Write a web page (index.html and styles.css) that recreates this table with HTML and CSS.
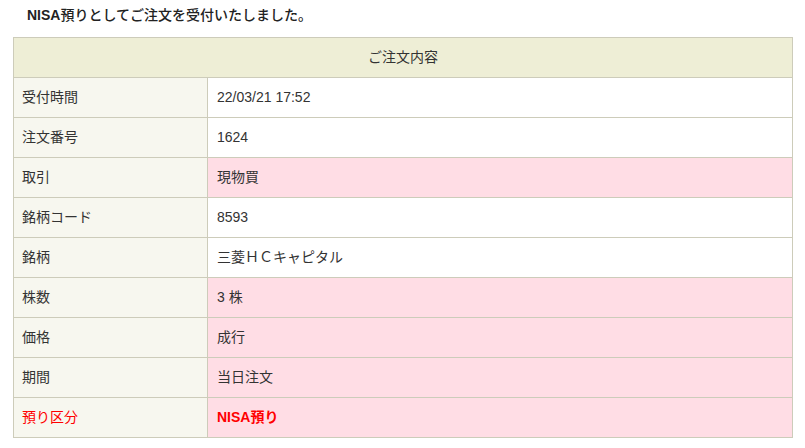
FILE: index.html
```html
<!DOCTYPE html>
<html lang="ja">
<head>
<meta charset="utf-8">
<link rel="stylesheet" href="styles.css">
</head>
<body>
<div class="page">
  <p class="notice"><b>NISA</b>預りとしてご注文を受付いたしました。</p>
  <table class="order">
    <colgroup>
      <col class="col-label">
      <col class="col-value">
    </colgroup>
    <thead>
      <tr><th colspan="2">ご注文内容</th></tr>
    </thead>
    <tbody>
      <tr><td class="label">受付時間</td><td class="value">22/03/21 17:52</td></tr>
      <tr><td class="label">注文番号</td><td class="value">1624</td></tr>
      <tr><td class="label">取引</td><td class="value pink">現物買</td></tr>
      <tr><td class="label">銘柄コード</td><td class="value">8593</td></tr>
      <tr><td class="label">銘柄</td><td class="value">三菱ＨＣキャピタル</td></tr>
      <tr><td class="label">株数</td><td class="value pink">3 株</td></tr>
      <tr><td class="label">価格</td><td class="value pink">成行</td></tr>
      <tr><td class="label">期間</td><td class="value pink">当日注文</td></tr>
      <tr><td class="label red">預り区分</td><td class="value pink red bold">NISA預り</td></tr>
    </tbody>
  </table>
</div>
</body>
</html>
```
FILE: styles.css
```css
html, body {
  margin: 0;
  padding: 0;
  background: #ffffff;
}
body {
  font-family: "Liberation Sans", "Noto Sans CJK JP", sans-serif;
  font-size: 14px;
  color: #333333;
}
.page {
  padding: 0 13px;
}
.notice {
  margin: 0;
  padding: 5px 0 0 14px;
  height: 37px;
  box-sizing: border-box;
  font-weight: 500;
  line-height: 20px;
  color: #222222;
}
.notice b {
  font-weight: bold;
}
.order {
  border-collapse: collapse;
  width: 780px;
  table-layout: fixed;
}
.col-label {
  width: 194px;
}
.order th,
.order td {
  border: 1px solid #cdccba;
  height: 37px;
  padding: 0 0 2px 0;
  vertical-align: middle;
  line-height: 20px;
}
.order th {
  background: #eeeed6;
  font-weight: normal;
  text-align: center;
}
.order td.label {
  background: #f7f7ef;
  padding-left: 8px;
}
.order td.value {
  background: #ffffff;
  padding-left: 9px;
}
.order td.pink {
  background: #ffdde5;
}
.red {
  color: #ff0000;
}
.bold {
  font-weight: bold;
}
```
